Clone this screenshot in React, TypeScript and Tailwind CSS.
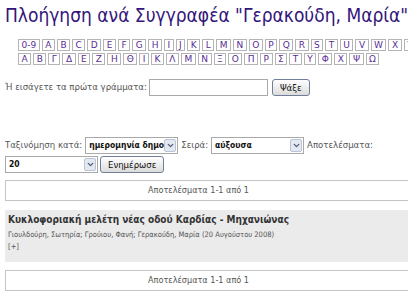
import { ChevronDown } from "lucide-react";

const LATIN = ["0-9", ..."ABCDEFGHIJKLMNOPQRSTUVWXYZ".split("")];
const GREEK = "ΑΒΓΔΕΖΗΘΙΚΛΜΝΞΟΠΡΣΤΥΦΧΨΩ".split("");

const CONDENSED = '"DejaVu Sans Condensed", "DejaVu Sans", Verdana, sans-serif';

function LetterRow({ letters }: { letters: string[] }) {
  return (
    <div className="flex gap-[2px] whitespace-nowrap">
      {letters.map((l) => (
        <a
          key={l}
          href="#"
          style={{ fontFamily: '"DejaVu Sans", Verdana, sans-serif' }}
          className="flex h-[12px] shrink-0 items-center justify-center border border-[#b4b4b4] px-[2.5px] text-[9px] leading-none text-[#5a2d96] shadow-[inset_0_0_0_1px_#fff]"
        >
          {l}
        </a>
      ))}
    </div>
  );
}

function FakeSelect({ value, width }: { value: string; width: string }) {
  return (
    <div
      className={`flex h-[17px] items-center border border-[#a9a9a9] bg-white ${width}`}
    >
      <span className="flex-1 overflow-hidden whitespace-nowrap pl-[3px] text-[8.5px] font-bold text-[#111]">
        {value}
      </span>
      <span className="mr-[1px] flex h-[13px] w-[12px] items-center justify-center rounded-[2px] border border-[#b9c4d6] bg-[#e4e8f0]">
        <ChevronDown size={9} strokeWidth={3.5} className="text-[#4d5a75]" />
      </span>
    </div>
  );
}

function Button({ children }: { children: React.ReactNode }) {
  return (
    <button
      type="button"
      className="h-[17px] rounded-[3px] border border-[#6f7f99] bg-gradient-to-b from-[#ffffff] to-[#dcdcdc] px-[7px] text-[9.5px] leading-none text-[#111]"
    >
      {children}
    </button>
  );
}

function ResultsBar() {
  return (
    <div className="w-[420px] border border-[#c4c4c4] py-[4px] pr-[33px] text-center text-[9px] leading-[11px] text-[#555]">
      Αποτελέσματα 1-1 από 1
    </div>
  );
}

export default function App() {
  return (
    <div
      className="h-[293px] w-[408px] overflow-hidden bg-white text-[#555]"
      style={{ fontFamily: CONDENSED }}
    >
      <h1 className="whitespace-nowrap pl-[5px] pt-[3px] text-[19px] leading-[25px] text-[#34157a]">
        Πλοήγηση ανά Συγγραφέα "Γερακούδη, Μαρία"
      </h1>

      <div className="ml-[18px] mt-[11px] flex flex-col gap-[2px]">
        <LetterRow letters={LATIN} />
        <LetterRow letters={GREEK} />
      </div>

      <div className="ml-[5px] mt-[14px] flex items-center gap-[2px] text-[9.5px]">
        <span className="whitespace-nowrap">Ή εισάγετε τα πρώτα γράμματα:</span>
        <input
          type="text"
          className="h-[17px] w-[119px] border border-[#a9a9a9] bg-white outline-none"
        />
        <span className="ml-[2px]">
          <Button>Ψάξε</Button>
        </span>
      </div>

      <div className="ml-[5px] mt-[41px] flex items-center gap-[3px] whitespace-nowrap text-[9.5px]">
        <span>Ταξινόμηση κατά:</span>
        <FakeSelect value="ημερομηνία δημοσίευσης" width="w-[93px]" />
        <span>Σειρά:</span>
        <FakeSelect value="αύξουσα" width="w-[93px]" />
        <span>Αποτελέσματα:</span>
      </div>
      <div className="ml-[5px] mt-[2px] flex items-center gap-[2px]">
        <FakeSelect value="20" width="w-[93px]" />
        <Button>Ενημέρωσε</Button>
      </div>

      <div className="ml-[5px] mt-[7px] flex flex-col">
        <ResultsBar />

        <div className="mt-[9px] w-[420px] bg-[#ebebeb] px-[3px] pb-[9px] pt-[3px]">
          <div className="text-[10px] font-bold leading-[13px] text-[#333]">
            Κυκλοφοριακή μελέτη νέας οδού Καρδίας - Μηχανιώνας
          </div>
          <div className="mt-[3px] text-[7.5px] leading-[12px] text-[#555]">
            Γιουλδούρη, Σωτηρία; Γρούιου, Φανή; Γερακούδη, Μαρία (20 Αυγούστου 2008)
          </div>
          <div className="text-[7.5px] leading-[12px] text-[#555]">[+]</div>
        </div>

        <div className="mt-[8px]">
          <ResultsBar />
        </div>
      </div>
    </div>
  );
}
